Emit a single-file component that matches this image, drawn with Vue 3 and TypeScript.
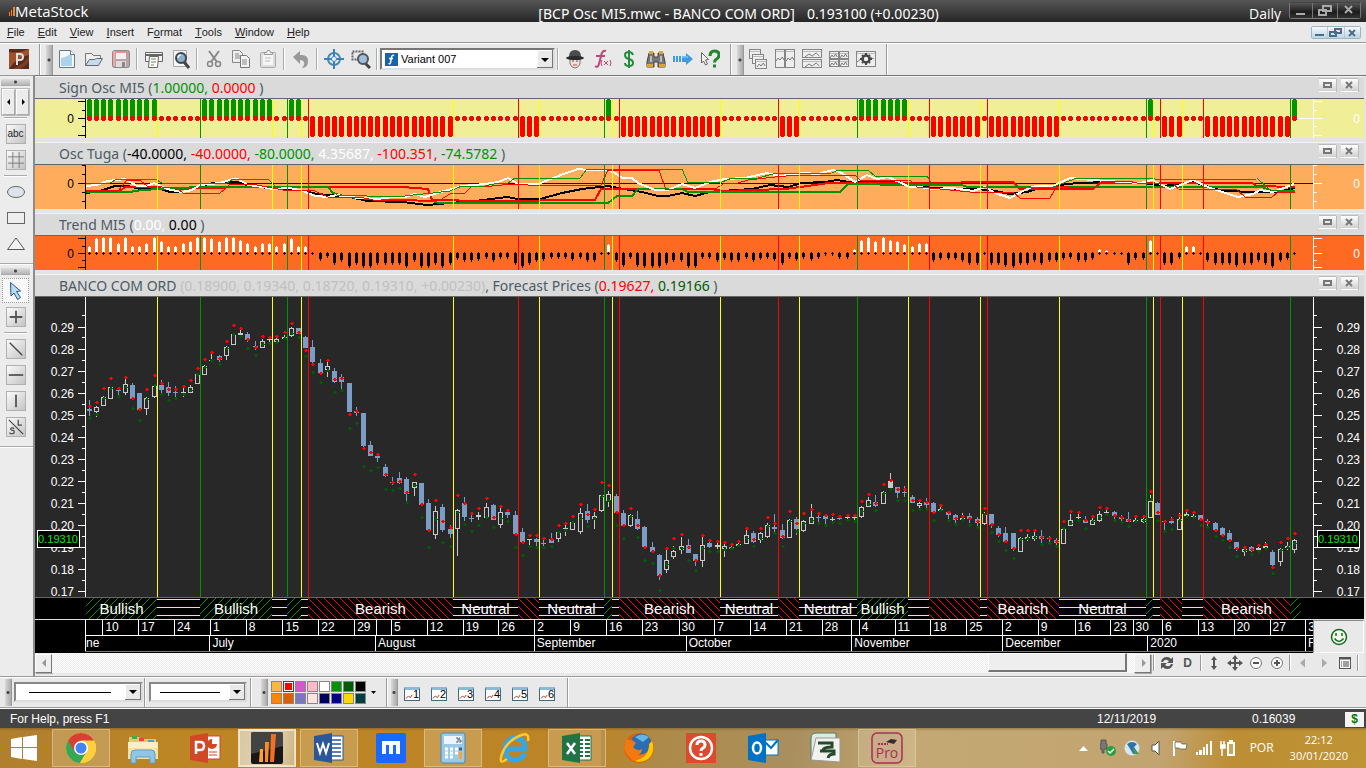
<script setup lang="ts">
import { ref } from 'vue'

type Candle = [number, number, number, number, number, number, number]
type Phase = 'bull' | 'bear' | 'neutral'

const PLOT_W = 1227
const slot = (i: number) => Math.floor(3.2 + 7.218 * i)

/* high, body top, body bottom, low, kind (0 down, 1 up, 2 filled), upper forecast, lower forecast */
const candles: Candle[] = [
  [103,112,114,119,0,109,121],[109,110,115,120,1,105,117],[99,100,109,109,1,91,101],[90,90,102,102,1,81,91],[91,93,94,99,0,91,99],[81,87,96,98,1,80,90],[86,88,102,102,0,101,111],[96,96,113,113,0,112,123],
  [100,101,112,118,1,92,102],[89,89,100,101,1,78,88],[83,88,93,96,0,86,97],[85,90,96,99,0,92,103],[89,95,96,100,0,92,101],[91,95,96,100,1,89,97],[88,90,96,96,1,83,93],[76,77,87,87,1,71,77],
  [68,69,78,78,1,62,70],[56,63,64,65,1,55,63],[58,59,63,65,0,61,67],[49,50,59,63,1,44,51],[36,37,48,48,1,28,37],[32,36,38,41,1,31,39],[35,37,43,45,0,42,51],[44,49,50,53,0,50,58],
  [42,44,51,51,1,39,47],[39,42,43,45,1,40,46],[40,42,45,45,1,39,45],[38,40,42,42,1,35,41],[30,31,39,40,1,26,36],[31,31,37,37,0,35,40],[39,40,51,51,0,53,59],[43,50,65,66,0,67,75],
  [62,66,76,76,0,76,85],[65,69,73,80,1,63,73],[71,74,85,86,0,82,95],[77,80,85,94,0,81,93],[86,86,115,115,0,117,131],[110,114,116,119,0,114,126],[116,116,149,150,0,151,169],[144,148,159,159,0,155,173],
  [156,159,161,165,0,157,170],[167,170,179,180,0,177,192],[180,185,186,188,0,185,193],[175,181,186,187,0,184,191],[180,182,197,204,0,195,205],[185,185,191,199,1,177,188],[186,186,208,208,0,207,220],[202,206,233,233,0,233,250],
  [209,214,238,242,1,203,222],[207,210,233,235,0,224,245],[228,232,237,241,0,230,249],[212,213,232,259,1,198,215],[200,206,220,224,0,206,227],[217,221,222,225,0,216,234],[215,218,220,223,1,211,228],[206,210,221,222,1,201,220],
  [207,208,223,223,0,220,230],[211,215,228,231,1,209,221],[212,215,218,221,0,213,224],[214,218,237,238,0,237,250],[231,235,245,247,0,245,258],[242,242,243,248,1,238,249],[241,242,245,249,0,238,250],[243,246,247,249,0,241,250],
  [236,242,246,246,0,242,249],[234,235,242,245,1,228,235],[228,231,232,239,1,226,233],[224,225,233,233,1,219,225],[211,216,235,237,1,207,221],[207,214,223,226,0,217,229],[215,219,222,232,1,212,221],[198,198,214,215,1,185,199],
  [194,197,204,210,1,188,203],[197,199,216,216,0,215,228],[213,216,229,230,0,228,241],[217,218,229,230,1,211,219],[214,222,232,233,0,228,240],[229,230,250,251,0,250,263],[245,250,255,256,0,254,266],[257,258,279,283,0,278,293],
  [253,263,273,276,1,251,267],[249,254,260,262,1,241,251],[240,249,253,257,1,237,251],[242,248,256,256,0,250,263],[257,257,264,269,0,263,273],[240,248,264,270,1,238,251],[245,246,250,251,0,243,254],[246,248,250,252,1,244,254],
  [247,249,252,260,1,245,252],[248,250,252,252,0,247,251],[244,247,249,250,1,244,248],[231,238,247,247,1,231,241],[234,236,245,246,0,242,249],[235,236,243,246,1,231,241],[226,228,240,241,1,220,229],[217,230,232,236,0,226,236],
  [227,233,241,242,0,239,249],[222,223,241,241,1,214,224],[220,222,232,238,0,226,234],[223,224,234,235,1,216,226],[207,220,227,227,1,212,223],[215,220,221,225,0,216,226],[217,219,222,227,0,218,228],[220,222,223,224,1,217,225],
  [218,221,222,223,0,219,226],[218,220,221,223,1,218,223],[218,220,221,225,1,218,224],[209,210,220,221,1,204,214],[200,203,210,210,1,197,207],[198,205,209,210,0,206,213],[194,195,207,207,1,187,196],[176,184,191,193,2,183,192],
  [190,190,196,201,0,192,203],[189,195,196,200,0,192,203],[198,200,206,206,0,203,213],[203,206,209,211,1,203,212],[201,205,208,211,0,205,212],[205,206,215,216,0,215,223],[209,212,214,215,1,208,213],[214,215,218,222,0,215,223],
  [217,218,223,226,0,221,227],[216,221,223,224,1,219,222],[216,219,222,226,0,221,228],[220,222,226,230,0,224,230],[215,217,227,228,1,211,217],[217,217,228,231,0,227,235],[229,231,238,240,0,237,244],[230,236,245,246,0,244,253],
  [236,236,252,254,0,251,261],[240,241,255,255,1,233,242],[237,240,242,244,1,233,241],[235,239,242,244,1,233,240],[233,239,242,246,0,240,247],[239,241,242,245,0,241,246],[241,243,246,250,0,244,249],[230,232,247,247,1,224,231],
  [217,223,229,229,1,214,226],[216,220,221,224,1,215,223],[219,223,226,226,0,223,231],[220,223,228,228,1,219,224],[214,217,224,225,1,210,220],[213,215,216,218,1,211,217],[214,215,219,222,0,218,223],[218,220,222,225,0,220,225],
  [215,222,225,225,0,223,229],[220,223,225,226,1,219,224],[218,222,225,226,1,219,223],[198,204,221,221,1,194,202],[205,206,218,218,0,215,223],[223,224,225,233,0,224,234],[220,224,226,227,0,222,232],[216,222,233,233,1,218,223],
  [215,217,219,221,1,213,219],[215,219,220,221,1,215,220],[218,218,223,224,0,222,228],[222,224,225,229,0,225,230],[225,226,233,235,0,233,239],[230,231,238,240,0,238,243],[233,236,243,245,0,243,250],[245,245,252,254,0,251,259],
  [249,252,255,259,1,250,253],[249,250,254,255,0,252,257],[249,251,253,256,1,248,254],[245,249,251,253,1,247,251],[253,255,268,269,0,270,276],[251,252,265,269,1,245,253],[245,249,251,253,1,241,250],[242,243,253,256,1,236,246],
]

const trend = [
  7,15,16,16,10,16,7,7,10,16,12,7,7,10,12,16,16,15,12,16,16,13,10,7,10,10,7,10,15,7,7,0,-8,-5,-12,-9,-15,-12,-15,-15,-12,-12,-12,-12,-15,-9,-15,-15,-12,-15,-12,
  -7,-9,-9,-8,-6,-9,-6,-6,-12,-15,-12,-9,-8,-6,-6,-6,-8,-6,-9,-9,0,9,-9,-14,-6,-14,-15,-15,-15,-12,-9,-9,-15,-15,-6,-6,-9,-7,-9,-9,-6,-9,-7,-6,-8,-12,-6,-8,-6,-8,-6,-3,-3,-6,-6,
  4,13,16,12,16,13,12,9,7,10,10,-9,-7,-7,-7,-9,-12,-12,0,-12,-12,-14,-15,-12,-12,-9,-12,-9,-9,-7,-6,-9,-9,-7,4,3,0,0,-12,-7,-7,13,0,-12,-12,-6,7,7,0,-9,-12,-12,-12,-14,-12,-12,-9,-12,-15,-9,-7,0,
]

const phases: { start: number; x: number; phase: Phase; label?: string }[] = [
  { start: 0, x: 0, phase: 'bull', label: 'Bullish' }, { start: 10, x: 71, phase: 'neutral' },
  { start: 16, x: 114, phase: 'bull', label: 'Bullish' }, { start: 26, x: 186, phase: 'neutral' },
  { start: 28, x: 201, phase: 'bull' }, { start: 30, x: 215, phase: 'neutral' },
  { start: 31, x: 222, phase: 'bear', label: 'Bearish' }, { start: 51, x: 367, phase: 'neutral', label: 'Neutral' },
  { start: 60, x: 432, phase: 'bear' }, { start: 63, x: 453, phase: 'neutral', label: 'Neutral' },
  { start: 72, x: 518, phase: 'bull' }, { start: 73, x: 526, phase: 'neutral' },
  { start: 74, x: 533, phase: 'bear', label: 'Bearish' }, { start: 88, x: 634, phase: 'neutral', label: 'Neutral' },
  { start: 96, x: 692, phase: 'bear' }, { start: 99, x: 713, phase: 'neutral', label: 'Neutral' },
  { start: 107, x: 771, phase: 'bull', label: 'Bullish' }, { start: 114, x: 822, phase: 'neutral' },
  { start: 117, x: 843, phase: 'bear' }, { start: 124, x: 894, phase: 'neutral' },
  { start: 125, x: 901, phase: 'bear', label: 'Bearish' }, { start: 135, x: 973, phase: 'neutral', label: 'Neutral' },
  { start: 147, x: 1060, phase: 'bull' }, { start: 148, x: 1067, phase: 'neutral' },
  { start: 149, x: 1074, phase: 'bear' }, { start: 152, x: 1096, phase: 'neutral' },
  { start: 155, x: 1117, phase: 'bear', label: 'Bearish' }, { start: 167, x: 1204, phase: 'bull' },
]
const PHASE_END = 1215
const phaseWidth = (k: number) => (k + 1 < phases.length ? phases[k + 1].x : PHASE_END) - phases[k].x
const phaseColor: Record<Phase, string> = { bull: '#009400', bear: '#ff0000', neutral: '#ffff00' }
const phaseAt = (i: number): Phase => {
  let p: Phase = 'bull'
  for (const s of phases) if (s.start <= i) p = s.phase
  return p
}
const bars = candles.map((_, i) => ({ i, x: slot(i), phase: phaseAt(i) }))

const rectPath = (x: number, y: number, w: number, h: number) => `M${x} ${y}h${w}v${h}h${-w}z`
const hollow = (i: number, c: Candle) => {
  const x = slot(i) - 2
  const h = Math.max(1, c[2] - c[1])
  return rectPath(x, c[1], 5, h) + (h > 2 ? rectPath(x + 1, c[1] + 1, 3, h - 2) : '')
}
const wicks = (i: number, c: Candle) => rectPath(slot(i), c[0], 1, c[1] - c[0]) + rectPath(slot(i), c[2], 1, Math.max(0, c[3] - c[2]))
const dot = (x: number, y: number) => rectPath(x - 1, y, 4, 1) + rectPath(x, y - 1, 2, 3)
const upPath = candles.map((c, i) => (c[4] ? (c[4] === 1 ? hollow(i, c) : rectPath(slot(i) - 2, c[1], 5, c[2] - c[1])) + wicks(i, c) : '')).join('')
const downPath = candles.map((c, i) => (c[4] ? '' : rectPath(slot(i) - 2, c[1], 5, Math.max(1, c[2] - c[1])) + wicks(i, c))).join('')
const highDots = candles.map((c, i) => dot(slot(i), c[5])).join('')
const lowDots = candles.map((c, i) => dot(slot(i), c[6])).join('')

const oscLines = [
  { color: '#000', w: 2, pts: '0,28 14,26 29,21 42,21 54,24 71,23 84,27 97,27 111,22 127,18 151,17 161,20 181,23 214,25 231,29 264,32 281,36 317,37 341,40 364,38 389,36 421,32 432,34 454,34 476,28 496,24 522,21 532,23 556,27 572,31 582,31 596,28 609,31 624,27 636,26 666,24 684,20 702,22 716,18 739,17 751,15 769,18 782,16 809,16 824,20 847,23 887,24 904,25 924,29 941,27 957,22 991,18 1024,17 1057,18 1077,21 1107,17 1137,26 1171,27 1191,27 1209,23' },
  { color: '#f00', w: 2, pts: '0,26 34,26 39,22 72,22 81,24 136,23 141,22 316,22 342,24 346,35 399,36 509,35 515,24 626,24 636,26 699,24 722,21 742,18 824,18 927,17 934,24 1007,24 1014,18 1166,18 1171,21 1209,22' },
  { color: '#009400', w: 2, pts: '0,27 46,27 47,26 71,24 114,22 242,22 247,28 261,32 284,34 347,36 352,38 522,38 531,31 546,31 552,24 596,24 602,27 754,27 762,19 824,20 876,20 881,22 1176,22 1186,26 1209,26' },
  { color: '#fff', w: 2, pts: '0,21 11,20 21,16 31,15 39,14 51,21 61,21 68,18 81,24 96,27 106,25 114,20 134,18 147,14 152,14 162,20 177,22 187,24 204,23 217,26 229,31 242,32 251,30 261,32 291,34 307,32 319,32 329,29 339,32 351,28 366,24 376,21 399,19 412,17 422,13 432,19 452,19 472,11 492,4 502,5 522,5 529,8 536,13 546,13 552,18 569,25 582,25 596,19 609,23 624,17 639,14 659,13 681,8 694,11 717,8 732,9 747,5 754,7 769,17 781,10 791,14 802,12 824,22 834,22 847,24 867,23 887,26 899,22 909,28 924,33 939,25 949,21 967,21 984,13 1006,15 1037,17 1054,18 1066,15 1084,24 1107,15 1124,23 1152,32 1167,29 1174,25 1187,27 1208,19' },
  { color: '#f00', w: 1, pts: '0,26 32,26 41,15 54,15 61,21 91,23 97,28 134,28 139,24 144,19 171,20 197,25 229,26 242,32 274,32 287,35 354,35 364,29 379,28 386,21 406,21 426,19 442,20 515,20 522,5 573,5 580,25 629,24 639,18 652,18 662,15 689,12 712,10 769,10 774,15 824,15 831,22 844,23 884,27 927,27 934,33 964,33 971,21 1007,24 1016,16 1042,16 1051,18 1087,18 1092,24 1151,25 1159,32 1186,32 1192,27 1209,27' },
  { color: '#009400', w: 1, pts: '0,18 24,18 31,14 69,14 76,18 141,18 147,14 182,14 189,21 241,22 251,30 311,32 327,30 347,28 364,26 376,21 399,21 412,18 422,18 429,13 494,13 501,4 596,4 602,18 636,17 646,13 672,13 687,9 746,8 752,5 782,5 789,11 841,11 846,19 873,19 881,22 967,22 991,13 1066,13 1072,15 1172,14 1184,25 1209,26' },
]

const weeks = [
  { x: 0, t: '' }, { x: 18, t: '10' }, { x: 54, t: '17' }, { x: 90, t: '24' }, { x: 126, t: '1' }, { x: 162, t: '8' }, { x: 199, t: '15' }, { x: 235, t: '22' }, { x: 271, t: '29' }, { x: 292, t: '' },
  { x: 307, t: '5' }, { x: 343, t: '12' }, { x: 379, t: '19' }, { x: 415, t: '26' }, { x: 451, t: '2' }, { x: 487, t: '9' }, { x: 523, t: '16' }, { x: 559, t: '23' }, { x: 596, t: '30' }, { x: 632, t: '7' },
  { x: 668, t: '14' }, { x: 704, t: '21' }, { x: 740, t: '28' }, { x: 769, t: '' }, { x: 776, t: '4' }, { x: 812, t: '11' }, { x: 848, t: '18' }, { x: 884, t: '25' }, { x: 920, t: '2' }, { x: 956, t: '9' },
  { x: 993, t: '16' }, { x: 1029, t: '23' }, { x: 1050, t: '30' }, { x: 1079, t: '6' }, { x: 1115, t: '13' }, { x: 1151, t: '20' }, { x: 1187, t: '27' }, { x: 1223, t: '3' },
]
const months = [
  { x: 0, t: 'ne' }, { x: 126, t: 'July' }, { x: 292, t: 'August' }, { x: 451, t: 'September' }, { x: 603, t: 'October' }, { x: 769, t: 'November' },
  { x: 920, t: 'December' }, { x: 1065, t: '2020' }, { x: 1223, t: 'F' },
]
const span = (list: { x: number }[], k: number) => (k + 1 < list.length ? list[k + 1].x : PLOT_W + 1) - list[k].x

const prices = Array.from({ length: 13 }, (_, k) => ({ t: (0.29 - k * 0.01).toFixed(2), y: Math.round(29.5 + k * 22.08) }))
const minorTicks = Array.from({ length: 13 }, (_, k) => Math.round(18.4 + k * 22.08))

interface Tick { y: number; long: boolean }
const t = (...v: number[]): Tick[] => v.map(n => ({ y: Math.abs(n), long: n > 0 }))
const panels = [
  { id: 'sign', h: 39, zero: 19, bg: '#f0ee96', ticks: t(2, -11, 19, -27, 36),
    title: [['Sign Osc MI5 (', ''], ['1.00000,', '#009400'], [' ', ''], ['0.0000', '#ff0000'], [' )', '']] },
  { id: 'osc', h: 44, zero: 18, bg: '#ffad5c', ticks: [{ y: 0, long: false }, ...t(-9, 18, -27, -36)],
    title: [['Osc Tuga (', ''], ['-40.0000, ', '#000'], ['-40.0000, ', '#ff0000'], ['-80.0000, ', '#009400'], ['4.35687, ', '#fff'], ['-100.351, ', '#ff0000'], ['-74.5782', '#009400'], [' )', '']] },
  { id: 'trend', h: 34, zero: 17, bg: '#ff6a22', ticks: t(2, -10, 17, -24, 31),
    title: [['Trend MI5 (', ''], ['0.00, ', '#fff'], ['0.00', '#000'], [' )', '']] },
]
const mainTitle = [['BANCO COM ORD ', ''], ['(0.18900, 0.19340, 0.18720, 0.19310, +0.00230)', '#c0c0c0'], [', Forecast Prices (', ''], ['0.19627, ', '#ff0000'], ['0.19166', '#005c00'], [' )', '']]

const win = (x: number, y: number, w: number, h: number) =>
  `<rect x="${x}.5" y="${y}.5" width="${w}" height="${h}" fill="#eee" stroke="#858585"/><path d="M${x + 1} ${y + 2}.5h${w - 1}" stroke="#bbb"/>`
const wave = (x: number, y: number, w: number) => `<path d="M${x} ${y}l${w / 4}-3 ${w / 5} 2 ${w / 4}-3 ${w / 5} 3" fill="none" stroke="#777"/>`

const icons: Record<string, string> = {
  new: '<path d="M2.5 1.500h11l4 4v13h-15z" fill="#f7f9fb" stroke="#678"/><path d="M4 9q7-1 11-6v14H4z" fill="#a9d3ee"/><path d="M13.500 1.500v4h4" fill="#fff" stroke="#678"/>',
  open: '<path d="M1.500 16.500v-12h6l2 2h7v3" fill="#eee" stroke="#777"/><path d="M1.500 16.500l4-6h5l2-1h6l-4 7z" fill="#c5dcec" stroke="#667"/>',
  save: '<rect x="1.500" y="1.500" width="17" height="17" rx="2" fill="#b9a3a4" stroke="#8f8686"/><path d="M3 2v15" stroke="#f4a5aa" stroke-width="2"/><rect x="5" y="2" width="10" height="8" fill="#f4f0f0"/><path d="M5 3h10" stroke="#f08b90" stroke-width="2"/><rect x="5" y="12" width="10" height="6" fill="#ddd"/><rect x="11" y="13" width="3" height="5" fill="#888"/>',
  print: '<path d="M1.500 12.500v-9h17v9z" fill="#f2f2f2" stroke="#666"/><path d="M2 6h16" stroke="#666" stroke-width="2"/><path d="M5.500 7.500h9l-1 11h-9z" fill="#fff" stroke="#666"/><path d="M7 10h5m-5 3h5m-5 3h3" stroke="#698b4c"/>',
  preview: '<path d="M2.500 1.500h13v16h-13z" fill="#f8f8f8" stroke="#aaa"/><path d="M13 13l5 6" stroke="#444" stroke-width="3"/><circle cx="10" cy="9" r="5" fill="#88aed0" stroke="#444" stroke-width="2"/><path d="M7 9q0-3 3-3" stroke="#e8f4ff" stroke-width="1.500" fill="none"/>',
  cut: '<path d="M7 13L15 2M13 13L5 2" stroke="#888" stroke-width="2"/><circle cx="6" cy="15" r="2.500" fill="none" stroke="#888" stroke-width="1.500"/><circle cx="14" cy="15" r="2.500" fill="none" stroke="#888" stroke-width="1.500"/>',
  copy: '<path d="M1.500 1.500h7l3 3v9h-10z" fill="#eee" stroke="#888"/><path d="M4 5h4m-4 2h5m-5 2h5" stroke="#888"/><path d="M9.500 6.500h6l3 3v9h-9z" fill="#f4f4f4" stroke="#777"/><path d="M11 11h5m-5 2h5m-5 2h5" stroke="#888"/>',
  paste: '<rect x="2.500" y="3.500" width="15" height="15" rx="1" fill="#ddd" stroke="#aaa"/><rect x="5" y="6" width="10" height="10" fill="#f6f6f6"/><path d="M6.500 5.500v-2h2l1-2h2l1 2h2v2z" fill="#eee" stroke="#999"/><path d="M7 9h6m-6 3h5" stroke="#bbb"/>',
  undo: '<path d="M2 8l7-6v4q8-1 8 6t-6 7q3-4 2-6t-4-2v4z" fill="#999"/>',
  target: '<circle cx="10" cy="10" r="6" fill="#dff0fa" stroke="#4786b8" stroke-width="2"/><path d="M10 0v20M0 10h20" stroke="#3c7fb5" stroke-width="2"/><circle cx="10" cy="10" r="2.500" fill="#e9f4fb" stroke="#4786b8"/>',
  zoomsel: '<path d="M1.500 2.500h10v8h-10z" fill="none" stroke="#666" stroke-dasharray="2 1" stroke-width="2"/><path d="M14 14l5 5" stroke="#444" stroke-width="3"/><circle cx="12" cy="10" r="5" fill="#9fc0dc" stroke="#555" stroke-width="2"/>',
  head: '<path d="M5 9h10v6q-2 4-5 4t-5-4z" fill="#f3ddd3" stroke="#777"/><path d="M4 8q0-7 6-7t6 7z" fill="#4b4b4b"/><ellipse cx="10" cy="9" rx="9" ry="2" fill="#2b2b2b"/><path d="M7 12h2m2 0h2" stroke="#38628a"/><path d="M8 16h4" stroke="#b55"/>',
  fx: '<path d="M14 2q-4-1-5 5l-2 8q-1 4-4 2m1-10h9" fill="none" stroke="#c24478" stroke-width="2"/><path d="M10 11q-2 3 0 6m8-6q2 3 0 6m-6-5l4 4m0-4l-4 4" fill="none" stroke="#c24478"/>',
  dollar: '<path d="M14 6q-1-3-4-3-4 0-4 3 0 3 4 4 4 1 4 4 0 3-4 3-4 0-4-3M10 1v18" fill="none" stroke="#238b3c" stroke-width="2"/>',
  binoc: '<path d="M3 4h5v4h4V4h5l2 9v5h-7v-5H8v5H1v-5z" fill="#777" stroke="#444"/><path d="M3 2h4v3H3zm10 0h4v3h-4zM1 15h6v3H1zm12 0h6v3h-6z" fill="#e0a52b"/><path d="M5 7v6m10-6v6" stroke="#bbb" stroke-width="2"/>',
  arrow: '<path d="M0 7h2v6H0zm3 0h2v6H3zm3 0h2v6H6zm3 0h4V4l7 6-7 6v-3H9z" fill="#3f9bdc"/><path d="M9 8h6" stroke="#a5d8fa"/>',
  helpcur: '<path d="M1.500 3.500l7 7-3 .5 2 4-2 1-2-4-2 2z" fill="#eee" stroke="#666"/><path d="M10 7q0-5 4.500-5t4.500 4q0 3-3 4.500-1.500 1-1.500 3M13 17h3" fill="none" stroke="#22852b" stroke-width="3"/>',
  cascade: win(1, 0, 11, 9) + win(4, 5, 11, 9) + win(7, 10, 11, 9) + wave(9, 18, 9),
  tilev: win(0, 0, 9, 18) + win(10, 0, 9, 18) + wave(1, 12, 9) + wave(11, 12, 9),
  tileh: win(0, 0, 19, 8) + win(0, 10, 19, 8) + wave(3, 8, 16) + wave(3, 18, 16),
  tile4: win(0, 2, 9, 7) + win(10, 2, 9, 7) + win(0, 10, 9, 7) + win(10, 10, 9, 7) + wave(1, 9, 8) + wave(11, 9, 8) + wave(1, 17, 8) + wave(11, 17, 8),
  winset: win(0, 2, 19, 15) + '<path d="M1 13l4-3m9-2l4 2" stroke="#777"/><circle cx="10" cy="10" r="3.500" fill="none" stroke="#444" stroke-width="2.500"/><path d="M10 4v2m0 8v2M4 10h2m8 0h2M6 6l1 1m6 6l1 1m0-8l-1 1m-6 6l-1 1" stroke="#444" stroke-width="2"/>',
  grid: '<path d="M6.500 1v18M13.500 1v18M1 6.500h18M1 13.500h18" stroke="#777"/>',
  ellipse: '<ellipse cx="10" cy="10" rx="8.500" ry="5.500" fill="#e0e4e9" stroke="#666"/>',
  rect: '<rect x="1.500" y="4.500" width="17" height="11" fill="#eee" stroke="#666"/>',
  tri: '<path d="M10 4l8.500 11.500h-17z" fill="#f2f2f2" stroke="#555"/>',
  cursor: '<path d="M4.500 1.500l10 8.500-4 .5 4 6-3 2-3.500-6.500-3 3z" fill="#b8dcf6" stroke="#29588c"/>',
  plus: '<path d="M10 3v14M3 10h14" stroke="#555" stroke-width="2"/>',
  diag: '<path d="M3 3l14 14" stroke="#444" stroke-width="1.500"/>',
  hline: '<path d="M2 10h16" stroke="#555" stroke-width="2"/>',
  vline: '<path d="M10 3v14" stroke="#555" stroke-width="2"/>',
  sl: '<path d="M2 2l16 16M12.500 2v6h4M8 12q-1-1.500-3-1-2 1 0 2.500 3 0 3 2 0 2-2.500 2T3 16" fill="none" stroke="#444" stroke-width="1.300"/>',
  refresh: '<path d="M4 9q1-5 6-5 3 0 4 2l2-2v6h-6l2-2q-4-3-6 1zm12 2q-1 5-6 5-3 0-4-2l-2 2v-6h6l-2 2q4 3 6-1z" fill="#555"/>',
  updown: '<path d="M10 3l3 4h-2v6h2l-3 4-3-4h2V7H7z" fill="#555"/>',
  move: '<path d="M10 2l3 4h-2v3h3V7l4 3-4 3v-2h-3v3h2l-3 4-3-4h2v-3H6v2l-4-3 4-3v2h3V6H7z" fill="#555"/>',
  minus: '<circle cx="10" cy="10" r="5.500" fill="#fafafa" stroke="#777"/><path d="M7 10h6" stroke="#555" stroke-width="2"/>',
  zplus: '<circle cx="10" cy="10" r="5.500" fill="#fafafa" stroke="#777"/><path d="M7 10h6m-3-3v6" stroke="#555" stroke-width="2"/>',
  prev: '<path d="M12 5.500v9L7 10z" fill="#aaa"/>',
  next: '<path d="M8 5.500v9l5-4.500z" fill="#aaa"/>',
  list: '<rect x="4.500" y="4.500" width="11" height="11" fill="#fafafa" stroke="#555"/><path d="M4 5.500h12" stroke="#555" stroke-width="2"/><path d="M6 9h1m1 0h6m-8 2h1m1 0h6m-8 2h1m1 0h6" stroke="#444"/>',
}

const task: Record<string, string> = {
  chrome: '<circle cx="16" cy="16" r="15" fill="#ffcf3e"/><path d="M3 8.500A15 15 0 0 0 15 31l7-12-6-3z" fill="#35a853"/><path d="M15 31A15 15 0 0 0 29 8.500H16l6 11z" fill="#ffcf3e"/><path d="M3 8.500A15 15 0 0 1 29 8.500H16L9 19z" fill="#d93f34"/><circle cx="16" cy="16" r="7" fill="#fff"/><circle cx="16" cy="16" r="5.500" fill="#4285f4"/>',
  explorer: '<path d="M2 5h10l2 2h15v20H2z" fill="#e8c766"/><path d="M5 4h5v3H5z" fill="#31b440"/><path d="M12 6h5v3h-5z" fill="#e24a3b"/><path d="M21 8h6v3h-6z" fill="#4e9de0"/><path d="M1 10h30v17H1z" fill="#f6e2a0"/><path d="M1 10h30v6H1z" fill="#fbefc3"/><path d="M4 31v-9q0-4 4-4h16q4 0 4 4v9h-5v-6H9v6z" fill="#8fc6e8" stroke="#5b9fca"/>',
  ppt: '<rect x="17" y="4" width="14" height="23" fill="#fff" stroke="#d24726"/><circle cx="23" cy="12" r="5" fill="#d24726"/><path d="M23 12V6h6v6z" fill="#fff"/><path d="M20 20h8m-8 3h8" stroke="#d24726"/><path d="M1 4l18-3v30L1 28z" fill="#d24726"/><path d="M7 22V10h4q4 0 4 4t-4 4H7" fill="none" stroke="#fff" stroke-width="2.500"/>',
  meta: '<rect x="0" y="0" width="32" height="32" rx="2" fill="#171717"/><path d="M0 0h32v14L0 22z" fill="#606060" opacity=".6"/><path d="M9 17h3v13H8z" fill="#ffa22c"/><path d="M14 10h4l-1 20h-3z" fill="#fb8c21"/><path d="M20 2h5l-2 28h-4z" fill="#f36f21"/>',
  word: '<rect x="17" y="4" width="13" height="24" fill="#fff" stroke="#2b579a"/><path d="M19 8h9m-9 4h9m-9 4h9m-9 4h9m-9 4h9" stroke="#2b579a" stroke-width="1.500"/><path d="M1 4l18-3v30L1 28z" fill="#2b579a"/><path d="M4 11l3 10 3-9 3 9 3-10" fill="none" stroke="#fff" stroke-width="2"/>',
  maxthon: '<rect x="1" y="1" width="30" height="30" rx="2" fill="#1769ff"/><path d="M9 22V11h14v11M16 11v11" fill="none" stroke="#fff" stroke-width="4"/>',
  calc: '<rect x="4" y="1" width="24" height="30" rx="2" fill="#9bc9ea" stroke="#4b87b5"/><rect x="7" y="4" width="18" height="8" fill="#edf5fb"/><path d="M19 6h2v4h-2m4-4h-1v2h2v2h-2" fill="none" stroke="#567"/><path d="M8 17h3m2 0h3m2 0h3M8 21h3m2 0h3m2 0h3M8 25h3m2 0h3" stroke="#fff" stroke-width="3"/><path d="M22 17h3" stroke="#467" stroke-width="3"/><path d="M22 20h3v7h-3z" fill="#ffa32d"/>',
  ie: '<path d="M26 21Q23 28 15.500 28 7 28 6 17h20q0-11-10-11-9 1-10 11" fill="none" stroke="#37a6e3" stroke-width="5"/><path d="M8 27Q-1 34 3 22 7 10 20 4q11-5 9 5" fill="none" stroke="#ffc928" stroke-width="2.500"/>',
  excel: '<rect x="17" y="4" width="13" height="24" fill="#fff" stroke="#217346"/><path d="M18 8h4m2 0h5m-11 4h4m2 0h5m-11 4h4m2 0h5m-11 4h4m2 0h5m-11 4h4m2 0h5" stroke="#217346" stroke-width="2"/><path d="M1 4l18-3v30L1 28z" fill="#217346"/><path d="M6 11l8 11m0-11L6 22" stroke="#fff" stroke-width="2.500"/>',
  firefox: '<circle cx="16" cy="16" r="15" fill="#e66000"/><circle cx="18" cy="12" r="10.500" fill="#2b6cb3"/><path d="M12 5q7-5 14 0l-6 5z" fill="#62b5e5"/><path d="M3 6q2 3 6 2l4 3-3 4q4 5 9 2 0 5-5 6 10 1 12-8l2 6q-3 9-12 9T1 17z" fill="#f07a10"/><path d="M29 9q4 11-4 18-6 4-13 2 15-4 14-17z" fill="#ffcb00"/>',
  help: '<rect x="1" y="1" width="30" height="30" fill="#dc4b2d"/><circle cx="16" cy="16" r="11" fill="none" stroke="#fff" stroke-width="2.500"/><path d="M12 13q0-4 4-4t4 4q0 2-2 3t-2 3M16 21v3" fill="none" stroke="#fff" stroke-width="3"/>',
  outlook: '<rect x="17" y="8" width="14" height="15" fill="#fff" stroke="#0072c6"/><path d="M18 10l6 6 7-8" fill="none" stroke="#0072c6" stroke-width="2"/><path d="M1 4l18-3v30L1 28z" fill="#0072c6"/><ellipse cx="10" cy="16" rx="4" ry="5.500" fill="none" stroke="#fff" stroke-width="2.500"/>',
  station: '<path d="M2 28V6q0-5 6-5h19v26z" fill="#dcebdd" stroke="#557a60"/><path d="M7 6h24v24l-29-2z" fill="#f2f2ee" stroke="#999"/><path d="M9 11h14v4q-8 0-9 3m-3 1h14v3q-5 0-6 4" fill="none" stroke="#26482d" stroke-width="3"/>',
  pro: '<rect x="1" y="1" width="30" height="30" rx="5" fill="#c9ad8a" stroke="#a92f4e" stroke-width="1.500"/><path d="M7 12h10" stroke="#a92f4e" stroke-width="2" stroke-dasharray="2 1"/><path d="M15 10l5-3 6 1-3 4z" fill="#3b2a2c"/>',
}
const tasks = [
  { k: 'chrome', n: 'Chrome', c: 'framed' }, { k: 'explorer', n: 'File Explorer', c: '' }, { k: 'ppt', n: 'PowerPoint', c: '' },
  { k: 'meta', n: 'MetaStock', c: 'active' }, { k: 'word', n: 'Word', c: 'framed' }, { k: 'maxthon', n: 'Maxthon', c: '' },
  { k: 'calc', n: 'Calculator', c: 'framed' }, { k: 'ie', n: 'Internet Explorer', c: '' }, { k: 'excel', n: 'Excel', c: 'framed stacked' },
  { k: 'firefox', n: 'Firefox', c: '' }, { k: 'help', n: 'Help', c: '' }, { k: 'outlook', n: 'Outlook', c: '' },
  { k: 'station', n: 'Station', c: '' }, { k: 'pro', n: 'Pro', c: 'framed' },
]

const menu = [['', 'F', 'ile'], ['', 'E', 'dit'], ['', 'V', 'iew'], ['', 'I', 'nsert'], ['F', 'o', 'rmat'], ['', 'T', 'ools'], ['', 'W', 'indow'], ['', 'H', 'elp']]
const toolGroups = [['new', 'open', 'save'], ['print', 'preview'], ['cut', 'copy', 'paste'], ['undo'], ['target', 'zoomsel']]
const toolsB = ['head', 'fx', 'dollar', 'binoc', 'arrow', 'helpcur']
const toolsC = ['cascade', 'tilev', 'tileh', 'tile4', 'winset']
const swatches = ['#f7b945', '#ff0000', '#d257d2', '#ffb9c8', '#ffffff', '#009400', '#005c00', '#000000', '#ff8400', '#dc5f05', '#7b78bf', '#ffe2e2', '#00005c', '#00008c', '#ffd700', '#004040']
const color = ref('#ff0000')
const variant = ref('Variant 007')
</script>

<template>
  <div class="app">
    <header class="titlebar">
      <div class="brand">
        <svg width="6" height="9" viewBox="0 0 6 9"><path d="M0 5h1v4H0zM2 3h1v6H2zM4 0h2v9H4z" fill="#f58220" /></svg>
        <span>MetaStock</span>
      </div>
      <h1><span>[BCP Osc MI5.mwc - BANCO COM ORD]</span><span>0.193100 (+0.00230)</span></h1>
      <span class="daily">Daily</span>
      <div class="winbtns">
        <button aria-label="Minimize"><svg width="22" height="15" viewBox="0 0 22 15"><path d="M6 11h9" stroke="#aaa" stroke-width="2" /></svg></button>
        <button aria-label="Restore"><svg width="24" height="15" viewBox="0 0 24 15"><path d="M10 3h8v5h-8zM6 7h7v5H6z" fill="none" stroke="#aaa" stroke-width="2" /></svg></button>
        <button aria-label="Close"><svg width="22" height="15" viewBox="0 0 22 15"><path d="M7 3l7 7m0-7l-7 7" stroke="#aaa" stroke-width="2" /></svg></button>
      </div>
    </header>

    <nav class="menubar">
      <button v-for="m in menu" :key="m.join('')">{{ m[0] }}<u>{{ m[1] }}</u>{{ m[2] }}</button>
      <div class="mdi">
        <button aria-label="Minimize chart"><svg width="15" height="11" viewBox="0 0 15 11"><path d="M3 8h9" stroke="#4c6d86" stroke-width="2" /></svg></button>
        <button aria-label="Restore chart"><svg width="16" height="11" viewBox="0 0 16 11"><path d="M7 2h6v4H7zM2 5h6v4H2z" fill="none" stroke="#4c6d86" stroke-width="2" /></svg></button>
        <button aria-label="Close chart"><svg width="15" height="11" viewBox="0 0 15 11"><path d="M4 3l6 6m0-6L4 9" stroke="#4c6d86" stroke-width="2" /></svg></button>
      </div>
    </nav>

    <div class="toolbar">
      <button class="power" aria-label="Power Console"><svg width="20" height="20" viewBox="0 0 20 20"><rect width="20" height="20" fill="#5a2a1a" /><path d="M0 3q9 2 20-3v6Q8 8 0 20z" fill="#a0522f" /><path d="M3 20q10-3 17-13v6q-4 5-9 7z" fill="#7c3d26" /><path d="M8 16V5h3q3 0 3 3t-3 3H8" fill="none" stroke="#ddd" stroke-width="2" /></svg></button>
      <i class="vrule wide" />
      <i class="grip" />
      <template v-for="(g, gi) in toolGroups" :key="gi">
        <button v-for="k in g" :key="k" class="tool" :aria-label="k"><svg width="20" height="20" viewBox="0 0 20 20" v-html="icons[k]" /></button>
        <i class="sep" />
      </template>
      <label class="variant">
        <svg width="13" height="13" viewBox="0 0 13 13"><rect width="13" height="13" fill="#1763ad" /><path d="M9 2.500q-2-1-2.500 2l-1 5q-.5 2-2 1M4 5.500h4" fill="none" stroke="#fff" stroke-width="1.500" /></svg>
        <select v-model="variant" aria-label="Template"><option>Variant 007</option></select>
      </label>
      <i class="sep" />
      <button v-for="k in toolsB" :key="k" class="tool" :aria-label="k"><svg width="20" height="20" viewBox="0 0 20 20" v-html="icons[k]" /></button>
      <i class="vrule wide" />
      <i class="grip" />
      <button v-for="k in toolsC" :key="k" class="tool" :aria-label="k"><svg width="20" height="20" viewBox="0 0 20 20" v-html="icons[k]" /></button>
      <i class="vrule wide" />
    </div>

    <div class="work">
      <aside class="side">
        <i class="hgrip" />
        <div class="pair"><button aria-label="Scroll left"><svg width="12" height="24" viewBox="0 0 12 24"><path d="M7 9v6l-3-3z" /></svg></button><button aria-label="Scroll right"><svg width="12" height="24" viewBox="0 0 12 24"><path d="M5 9v6l3-3z" /></svg></button></div>
        <i class="hline" />
        <button class="sq abc">abc</button>
        <button class="sq" aria-label="Grid"><svg width="18" height="18" viewBox="0 0 20 20" v-html="icons.grid" /></button>
        <i class="hline" />
        <button v-for="k in ['ellipse', 'rect', 'tri']" :key="k" class="bare" :aria-label="k"><svg width="20" height="20" viewBox="0 0 20 20" v-html="icons[k]" /></button>
        <i class="hline full" />
        <i class="hgrip" />
        <button class="pressed" aria-label="Pointer"><svg width="20" height="20" viewBox="0 0 20 20" v-html="icons.cursor" /></button>
        <button class="sq" aria-label="Crosshair"><svg width="18" height="18" viewBox="0 0 20 20" v-html="icons.plus" /></button>
        <i class="hline" />
        <button v-for="k in ['diag', 'hline', 'vline', 'sl']" :key="k" class="sq" :aria-label="k"><svg width="18" height="18" viewBox="0 0 20 20" v-html="icons[k]" /></button>
        <i class="hline full" />
      </aside>

      <main class="charts">
        <section v-for="p in panels" :key="p.id" class="panel">
          <div class="phead">
            <h2><span v-for="(s, k) in p.title" :key="k" :style="{ color: s[1] }">{{ s[0] }}</span></h2>
            <button aria-label="Maximize"><svg width="17" height="12" viewBox="0 0 17 12"><path d="M5 4h7v4H5z" fill="none" stroke="#777" stroke-width="2" /></svg></button>
            <button aria-label="Close"><svg width="17" height="12" viewBox="0 0 17 12"><path d="M5 3l6 6m0-6L5 9" stroke="#777" stroke-width="2" /></svg></button>
          </div>
          <div class="plotrow" :style="{ background: p.bg }">
            <svg class="axis" width="51" :height="p.h">
              <g fill="#000"><rect x="50" y="0" width="1" :height="p.h" /><rect v-for="k in p.ticks" :key="k.y" :x="k.long ? 43 : 47" :y="k.y" :width="k.long ? 7 : 3" height="1" /></g>
              <text x="39" :y="p.zero + 5" text-anchor="end">0</text>
            </svg>
            <svg class="plot" :height="p.h" :viewBox="`0 0 ${PLOT_W} ${p.h}`" preserveAspectRatio="none">
              <rect v-if="p.id !== 'trend'" x="0" :y="p.zero" :width="PLOT_W" height="1" :fill="p.id === 'sign' ? '#fff' : '#0000d0'" />
              <g v-if="p.id === 'osc'" fill="none"><polyline v-for="(l, k) in oscLines" :key="k" :points="l.pts" :stroke="l.color" :stroke-width="l.w" /></g>
              <rect v-for="s in phases.slice(1)" :key="s.x" :x="s.x" y="0" width="1" :height="p.h" :fill="phaseColor[s.phase]" />
              <template v-if="p.id === 'sign'">
                <template v-for="b in bars" :key="b.i">
                  <path v-if="b.phase === 'bull'" :d="rectPath(b.x - 2, 1, 5, 18) + rectPath(b.x - 1, 0, 3, 1)" fill="#009400" />
                  <path v-if="b.phase === 'bear'" :d="`M${b.x - 2} 18h5v19h-1v1h-3v-1h-1z`" fill="#f00" />
                  <path :d="rectPath(b.x - 2, 18, 5, 3) + rectPath(b.x - 1, 17, 3, 5)" fill="#f00" />
                </template>
              </template>
              <template v-if="p.id === 'trend'">
                <template v-for="b in bars" :key="b.i">
                  <path v-if="trend[b.i] > 0" :d="rectPath(b.x - 1, 18 - trend[b.i], 3, trend[b.i] - 2) + rectPath(b.x, 17 - trend[b.i], 1, 2)" fill="#fff" />
                  <path v-if="trend[b.i] < 0" :d="rectPath(b.x - 1, 17, 3, -trend[b.i] - 2) + rectPath(b.x, 16, 1, 1 - trend[b.i])" fill="#000" />
                  <path v-else :d="rectPath(b.x - 1, 17, 3, 1) + rectPath(b.x, 16, 1, 3)" fill="#000" />
                </template>
              </template>
            </svg>
            <svg class="axis right" width="51" :height="p.h">
              <g fill="#fff"><rect x="0" y="0" width="1" :height="p.h" /><rect v-for="k in p.ticks" :key="k.y" x="1" :y="k.y" :width="k.long ? 8 : 3" height="1" /></g>
              <text x="47" :y="p.zero + 5" text-anchor="end" fill="#fff">0</text>
            </svg>
          </div>
        </section>

        <section class="panel price">
          <div class="phead">
            <h2><span v-for="(s, k) in mainTitle" :key="k" :style="{ color: s[1] }">{{ s[0] }}</span></h2>
            <button aria-label="Maximize"><svg width="17" height="12" viewBox="0 0 17 12"><path d="M5 4h7v4H5z" fill="none" stroke="#777" stroke-width="2" /></svg></button>
            <button aria-label="Close"><svg width="17" height="12" viewBox="0 0 17 12"><path d="M5 3l6 6m0-6L5 9" stroke="#777" stroke-width="2" /></svg></button>
          </div>
          <div class="plotrow">
            <svg class="axis" width="51" height="300" fill="#fff">
              <rect x="50" y="0" width="1" height="300" />
              <rect v-for="y in minorTicks" :key="y" x="47" :y="y" width="3" height="1" />
              <template v-for="q in prices" :key="q.t"><rect x="43" :y="q.y" width="7" height="1" /><text x="39" :y="q.y + 5" text-anchor="end">{{ q.t }}</text></template>
              <rect x="2.500" y="233.500" width="42" height="17" fill="#000" stroke="#fff" /><text class="last" x="23" y="246" text-anchor="middle">0.19310</text>
            </svg>
            <svg class="plot" height="300" :viewBox="`0 0 ${PLOT_W} 300`" preserveAspectRatio="none">
              <rect v-for="s in phases.slice(1)" :key="s.x" :x="s.x" y="0" width="1" height="300" :fill="phaseColor[s.phase]" />
              <path :d="downPath" fill="#7b9cc4" />
              <path :d="upPath" fill="#c8c8c8" fill-rule="evenodd" />
              <path :d="lowDots" fill="#005c00" />
              <path :d="highDots" fill="#f00" />
            </svg>
            <svg class="axis right" width="51" height="300" fill="#fff">
              <rect x="0" y="0" width="1" height="300" />
              <rect v-for="y in minorTicks" :key="y" x="1" :y="y" width="3" height="1" />
              <template v-for="q in prices" :key="q.t"><rect x="1" :y="q.y" width="8" height="1" /><text x="47" :y="q.y + 5" text-anchor="end">{{ q.t }}</text></template>
              <rect x="4.500" y="233.500" width="42" height="17" fill="#000" stroke="#fff" /><text class="last" x="25" y="246" text-anchor="middle">0.19310</text>
            </svg>
          </div>
          <div class="band">
            <div class="track">
              <div v-for="(s, k) in phases" :key="s.x" :class="['phase', s.phase]" :style="{ flexGrow: phaseWidth(k) }"><span v-if="s.label">{{ s.label }}</span></div>
              <div class="rest" />
            </div>
          </div>
          <div class="dates">
            <div class="cols">
              <div class="cells"><span v-for="(w, k) in weeks" :key="w.x" :style="{ flexGrow: span(weeks, k) }">{{ w.t }}</span></div>
              <div class="cells months"><span v-for="(m, k) in months" :key="m.x" :style="{ flexGrow: span(months, k) }">{{ m.t }}</span></div>
            </div>
            <div class="smiley"><svg width="18" height="18" viewBox="0 0 18 18"><circle cx="9" cy="9" r="7.500" fill="#f3f7ea" stroke="#146b20" stroke-width="1.500" /><path d="M6 5v3m6-3v3M4.500 10.500q4.500 6 9 0" fill="none" stroke="#146b20" stroke-width="1.500" /></svg></div>
          </div>
        </section>

        <div class="scroll">
          <button class="raised" aria-label="Scroll back"><svg width="14" height="16" viewBox="0 0 14 16"><path d="M9 4v8L5 8z" fill="#999" /></svg></button>
          <div class="rail"><i class="thumb" /></div>
          <button class="raised" aria-label="Scroll forward"><svg width="14" height="16" viewBox="0 0 14 16"><path d="M6 4v8l4-4z" fill="#999" /></svg></button>
          <i class="vrule" />
          <button class="mini" aria-label="Refresh"><svg width="20" height="20" viewBox="0 0 20 20" v-html="icons.refresh" /></button>
          <button class="mini d">D</button>
          <i class="vrule" />
          <button v-for="k in ['updown', 'move', 'minus', 'zplus']" :key="k" class="mini" :aria-label="k"><svg width="20" height="20" viewBox="0 0 20 20" v-html="icons[k]" /></button>
          <i class="vrule" />
          <button v-for="k in ['prev', 'next', 'list']" :key="k" class="mini" :aria-label="k"><svg width="20" height="20" viewBox="0 0 20 20" v-html="icons[k]" /></button>
          <i class="vrule" />
        </div>
      </main>
    </div>

    <div class="toolbar bottom">
      <i class="grip" />
      <select class="line long" aria-label="Line style"><option></option></select>
      <i class="vrule" />
      <select class="line" aria-label="Line weight"><option></option></select>
      <i class="vrule" />
      <i class="grip" />
      <div class="palette">
        <button v-for="s in swatches" :key="s" :class="{ on: s === color }" :style="{ backgroundColor: s }" :aria-label="s" @click="color = s" />
      </div>
      <button class="more" aria-label="More colours"><svg width="5" height="3" viewBox="0 0 5 3"><path d="M0 0h5L2.500 3z" /></svg></button>
      <i class="vrule" />
      <i class="grip" />
      <button v-for="n in 6" :key="n" class="layout"><svg width="8" height="10" viewBox="0 0 9 10"><path d="M1 9l3-3 2 2 2-3" fill="none" stroke="#a22" /></svg>{{ n }}</button>
      <i class="vrule last-rule" />
    </div>

    <footer class="status">
      <span class="msg">For Help, press F1</span><span class="date">12/11/2019</span><span class="val">0.16039</span>
      <span class="cash">$</span>
    </footer>

    <div class="taskbar">
      <button class="start" aria-label="Start"><svg width="28" height="26" viewBox="0 0 28 26"><path d="M1 4l11-2v10H1zM13 2l14-2v12H13zM1 13h11v11L1 22zM13 13h14v13l-14-2z" fill="#fff" /></svg></button>
      <button v-for="a in tasks" :key="a.k" :class="['app-btn', a.c]" :aria-label="a.n"><svg width="32" height="32" viewBox="0 0 32 32" v-html="task[a.k]" /><span v-if="a.k === 'pro'" class="pro">Pro</span></button>
      <div class="tray">
        <svg class="up" width="9" height="5" viewBox="0 0 9 5"><path d="M4.500 0L9 5H0z" fill="#fff" /></svg>
        <svg width="16" height="18" viewBox="0 0 16 18"><path d="M1 1h5v4h1v5H4v4H2v-4H0V5h1z" fill="#777" stroke="#555" /><circle cx="11" cy="12" r="5" fill="#24a33b" /><path d="M8 12l2 2 4-4" fill="none" stroke="#fff" stroke-width="1.500" /></svg>
        <svg width="16" height="16" viewBox="0 0 16 16"><circle cx="8" cy="8" r="7.500" fill="#d7e6ef" /><path d="M3 4q5-4 10 0l-3 3 4 6q-5 3-6-1z" fill="#2f74a8" /><path d="M9 8l6 6h-5z" fill="#3aa04f" /></svg>
        <svg width="16" height="16" viewBox="0 0 16 16"><path d="M4 5h3l4-4v14l-4-4H4z" fill="#fff" stroke="#554" stroke-width="1" /></svg>
        <svg width="16" height="16" viewBox="0 0 16 16"><path d="M2 1v15" stroke="#fff" stroke-width="2" /><path d="M3 2h6l1 2h5l-1 5H8L7 8H3z" fill="#fff" stroke="#554" stroke-width=".7" /></svg>
        <svg width="16" height="14" viewBox="0 0 16 14"><path d="M0 11h2v3H0zm3-2h3v5H3zm4-3h2v8H7zm3-3h2v11h-2zm4-3h2v14h-2z" fill="#fff" /></svg>
        <svg width="16" height="16" viewBox="0 0 16 16"><path d="M1 1v4m3-4v4M0 5h5v3H0zm2 3v8" fill="#fff" stroke="#fff" stroke-width="1.500" /><rect x="8" y="3" width="6" height="12" fill="#c9a55b" stroke="#fff" stroke-width="2" /><path d="M9 1h4" stroke="#fff" stroke-width="2" /></svg>
        <span class="lang">POR</span>
        <time class="clock"><span>22:12</span><span>30/01/2020</span></time>
      </div>
    </div>
  </div>
</template>

<style>
body { margin: 0; }
</style>

<style scoped>
.app { min-height: 100vh; display: flex; flex-direction: column; background: #e9e9e9; font: 12px/15px "Liberation Sans", Arial, sans-serif; color: #000; overflow: hidden; }
.app *, .app *::before { box-sizing: border-box; }
button { border: 0; padding: 0; margin: 0; background: none; font: inherit; color: inherit; display: flex; align-items: center; justify-content: center; flex: none; }
svg { display: block; flex: none; }
h1, h2 { margin: 0; font-weight: 400; }
select { appearance: none; font: inherit; border-radius: 0; }

.titlebar { height: 22px; flex: none; display: flex; align-items: center; padding-right: 5px; background: linear-gradient(#565656, #404040 45%, #262626); color: #fff; font: 15px/22px "Open Sans", "Noto Sans", sans-serif; }
.brand { width: 228px; display: flex; align-items: center; padding-left: 9px; }
.titlebar h1 { flex: 1; display: flex; justify-content: center; gap: 12px; font: 14px/22px "Noto Sans", "Open Sans", sans-serif; padding-top: 5px; white-space: nowrap; }
.daily { font-size: 14px; padding: 5px 8px 0 0; }
.winbtns { display: flex; align-self: flex-start; margin-top: 2px; border: 1px solid #777; border-top-color: #444; border-radius: 0 0 3px 3px; }
.winbtns button { background: linear-gradient(#555, #1c1c1c 60%, #333); border-right: 1px solid #777; }
.winbtns button:last-child { border: 0; }

.menubar { height: 20px; flex: none; display: flex; align-items: center; gap: 13px; padding: 0 5px 0 7px; font-size: 11px; color: #222; }
.mdi { display: flex; margin-left: auto; border: 1px solid #9bb8ca; border-radius: 2px; }
.mdi button { background: linear-gradient(#f4f9fc, #bcd5e2); border-right: 1px solid #b6cbd8; }
.mdi button:last-child { border: 0; }

.toolbar { height: 33px; flex: none; display: flex; align-items: center; border-top: 1px solid #999; box-shadow: inset 0 1px #fff; }
.toolbar > * { flex: none; }
.power { padding-left: 9px; }
.vrule { width: 2px; align-self: stretch; margin: 1px 3px 0; background: #999; border-right: 1px solid #fff; }
.toolbar .wide { margin: 1px 5px 0 7px; }
.toolbar .power + .wide { margin: 1px 5px 0 10px; }
.grip { width: 7px; align-self: stretch; margin-top: 2px; background: radial-gradient(circle at 50% 50%, #444 0 1px, transparent 2px), linear-gradient(90deg, #d9d9d9, #aaa); border-right: 1px solid #999; }
.tool { width: 27px; height: 28px; }
.sep { width: 6px; height: 22px; background: linear-gradient(90deg, transparent 2px, #aaa 2px 3px, #fff 3px 4px, transparent 4px); }
.variant { width: 175px; height: 22px; display: flex; align-items: center; background: #fff; border: 2px solid #777; border-right-color: #ddd; border-bottom-color: #ddd; padding-left: 3px; }
.variant select { flex: 1; height: 18px; margin-left: 3px; border: 0; padding: 0; font-size: 11px; background: url("data:image/svg+xml,%3Csvg xmlns='http://www.w3.org/2000/svg' width='16' height='18'%3E%3Cpath d='M0 0h16v18H0z' fill='%23777'/%3E%3Cpath d='M0 0h15v17H0z' fill='%23fff'/%3E%3Cpath d='M1 1h14v16H1z' fill='%23e9e9e9'/%3E%3Cpath d='M4 8h8l-4 4z'/%3E%3C/svg%3E") right center no-repeat; }

.work { display: flex; flex: none; }
.side { width: 35px; flex: none; display: flex; flex-direction: column; align-items: center; padding-right: 2px; background: #ececec; border-right: 2px solid #8c8c8c; border-top: 1px solid #999; }
.hgrip { width: 29px; height: 7px; margin: 3px 0; background: radial-gradient(circle at 50% 50%, #444 0 1px, transparent 2px), linear-gradient(#dcdcdc, #b4b4b4); border-bottom: 1px solid #aaa; }
.pair { display: flex; gap: 1px; }
.pair button { border: 1px solid #aaa; border-top-color: #fff; border-left-color: #fff; width: 13px; height: 26px; box-shadow: 0 0 0 1px #bbb; }
.hline { width: 23px; height: 2px; flex: none; margin: 2px 0; background: #aaa; border-bottom: 1px solid #fff; }
.hline.full { width: 33px; margin: 6px 0 0; align-self: flex-start; }
.sq { width: 20px; height: 20px; margin: 3px 0; background: linear-gradient(135deg, #fafafa, #c4c4c4); border: 1px solid #b0b0b0; }
.abc { font: 10px/18px "Liberation Sans", Arial, sans-serif; color: #222; }
.bare { width: 20px; height: 20px; margin: 3px 0; }
.pressed { width: 27px; height: 25px; margin-bottom: 1px; background: #f8f8f8; border: 1px dotted #999; }

.charts { flex: 1; min-width: 0; padding-right: 2px; background: #e4e4e4; border-top: 1px solid #777; }
.panel { margin-bottom: 4px; }
.price { margin-bottom: 0; background: #000; }
.phead { height: 23px; display: flex; align-items: center; background: #dadada; border-top: 1px solid #f4f4f4; border-bottom: 1px solid #666; padding: 0 6px 0 24px; gap: 5px; }
.phead h2 { flex: 1; min-width: 0; font: 14px/21px "Noto Sans", "Open Sans", sans-serif; color: #4c5b64; white-space: pre; overflow: hidden; }
.phead button { background: linear-gradient(#fff, #d0d0d0); border-bottom: 1px solid #fff; box-shadow: 0 -1px #bbb, 1px 0 #bbb; height: 13px; margin-bottom: 5px; }
.plotrow { display: flex; }
.plot { flex: 1 1 0; width: 0; min-width: 0; shape-rendering: crispEdges; }
.axis { shape-rendering: crispEdges; font: 12px "Liberation Sans", Arial, sans-serif; overflow: hidden; }
.price .plotrow { background: #282828; }
.last { fill: #00ee00; font-size: 11px; }

.band { height: 22px; padding: 0 51px; border-top: 1px solid #666; background: #000; }
.track { display: flex; height: 21px; }
.phase { flex: 1 1 0; min-width: 0; display: flex; align-items: center; justify-content: center; white-space: nowrap; color: #fff; font-size: 15px; line-height: 20px; }
.phase.bull { background: url("data:image/svg+xml,%3Csvg xmlns='http://www.w3.org/2000/svg' width='8' height='8' shape-rendering='crispEdges'%3E%3Cpath d='M0 8L8 0' stroke='%23009400'/%3E%3C/svg%3E"); }
.phase.bear { background: url("data:image/svg+xml,%3Csvg xmlns='http://www.w3.org/2000/svg' width='8' height='8' shape-rendering='crispEdges'%3E%3Cpath d='M0 0L8 8' stroke='%23f00'/%3E%3C/svg%3E"); }
.phase.neutral { background: linear-gradient(#ff0, #ff0) 0 1px / 100% 1px no-repeat, linear-gradient(#ff0, #ff0) 0 9px / 100% 1px no-repeat, linear-gradient(#ff0, #ff0) 0 17px / 100% 1px no-repeat; }
.rest { flex: 12 1 0; }

.dates { display: flex; padding-left: 50px; background: #000; height: 34px; border-top: 1px solid #ddd; }
.cols { flex: 1; min-width: 0; }
.cells { display: flex; height: 16px; border-bottom: 1px solid #fff; }
.cells span { flex: 1 1 0; width: 0; min-width: 0; overflow: hidden; border-left: 1px solid #fff; color: #fff; padding-left: 2px; white-space: nowrap; line-height: 15px; }
.cells span:empty { padding: 0; }
.cells.months span:first-child { padding-left: 0; }
.cells.months { border-color: #777; }
.smiley { width: 51px; background: #e9e9e9; border: 1px solid #888; border-right-color: #fff; border-bottom-color: #fff; display: flex; align-items: center; justify-content: center; }

.scroll { height: 23px; display: flex; align-items: center; background: #e9e9e9; padding: 0 4px 3px 0; }
.raised { width: 17px; height: 19px; background: #eee; border: 1px solid #fff; border-right-color: #777; border-bottom-color: #777; box-shadow: 1px 1px #aaa; }
.rail { flex: 1; height: 20px; display: flex; justify-content: flex-end; padding-right: 7px; background: repeating-conic-gradient(#fff 0 25%, #ececec 0 50%) 0 0 / 2px 2px; }
.thumb { width: 139px; height: 19px; background: #eee; border: 1px solid #fff; border-right: 2px solid #777; border-bottom: 2px solid #777; }
.scroll .vrule { height: 16px; align-self: center; margin: 0 1px 0 2px; }
.mini { width: 21px; height: 20px; color: #555; }
.d { font-weight: 700; }

.bottom { height: 32px; border-top: 1px solid #999; border-bottom: 1px solid #999; padding-left: 5px; }
.bottom .grip { margin-bottom: 1px; }
.bottom .vrule { margin: 1px 3px 0; }
.bottom .long + .vrule { margin: 1px 1px 0; }
.bottom .line + .vrule + .grip { margin-left: 6px; }
.line { width: 98px; height: 20px; margin-left: 2px; border: 2px solid #888; border-right-color: #ddd; border-bottom-color: #ddd; background: url("data:image/svg+xml,%3Csvg xmlns='http://www.w3.org/2000/svg' width='16' height='16'%3E%3Cpath d='M0 0h16v16H0z' fill='%23777'/%3E%3Cpath d='M0 0h15v15H0z' fill='%23fff'/%3E%3Cpath d='M1 1h14v14H1z' fill='%23e9e9e9'/%3E%3Cpath d='M4 6h8l-4 4z'/%3E%3C/svg%3E") right center no-repeat, linear-gradient(#000, #000) 9px 8px / 60px 1px no-repeat, #fff; }
.line.long { width: 129px; background-size: auto, 82px 1px, auto; background-position: right center, 13px 8px, 0 0; }
.palette { display: grid; grid-template-columns: repeat(8, 12px); margin-left: 3px; padding-top: 2px; }
.palette button { width: 11px; height: 11px; margin-bottom: 1px; border: 1px solid #888; }
.palette .on { border: 1px dashed #444; outline: 1px solid #fff; outline-offset: -2px; }
.more { width: 12px; height: 20px; margin-right: 4px; }
.layout { width: 16px; height: 14px; margin: 3px 5px 0 6px; border: 1px solid #467; border-top: 3px solid #8bbad6; border-radius: 1px; background: #fff; font-size: 11px; line-height: 11px; }
.bottom .last-rule { margin-left: 7px; }

.status { height: 20px; flex: none; display: flex; align-items: center; background: #444; border-top: 1px solid #fff; color: #fff; padding: 2px 2px 0 10px; }
.msg { flex: 1; }
.date { width: 155px; }
.val { width: 93px; }
.cash { width: 19px; height: 15px; background: #f4f4f4; color: #007a00; font-weight: 700; text-align: center; }

.taskbar { flex: 1 0 40px; display: flex; align-items: flex-start; gap: 4px; padding-top: 1px; background: linear-gradient(#5e471a66, transparent 3px), linear-gradient(100deg, #b08030 0, #bd8523 14%, #bc8428 44%, #ae8a48 48%, #a98f5e 58%, #c4a873 67%, #c2a470 85%, #bd8e34 90%, #bf9435 100%); }
.start { width: 48px; height: 38px; }
.app-btn { width: 58px; height: 38px; position: relative; }
.framed { background: #e8dcc444; border: 1px solid #e3cfa699; }
.stacked { box-shadow: inset -4px 0 #9e7f4c66; }
.active { background: linear-gradient(100deg, #d9c7a0, #e2d5b5 60%, #cdb27c); border: 1px solid #fff8; outline: 1px solid #fff8; outline-offset: -2px; }
.pro { position: absolute; left: 0; right: 0; top: 16px; text-align: center; font: 14px/14px "Open Sans", sans-serif; color: #a92f4e; }
.tray { margin-left: auto; height: 38px; display: flex; align-items: center; gap: 8px; padding-right: 18px; color: #fff; font: 11px/16px "Open Sans", "Noto Sans", sans-serif; }
.up { margin-right: 4px; }
.lang { padding: 0 8px 0 6px; font-size: 12px; }
.clock { display: flex; flex-direction: column; align-items: center; }
</style>
